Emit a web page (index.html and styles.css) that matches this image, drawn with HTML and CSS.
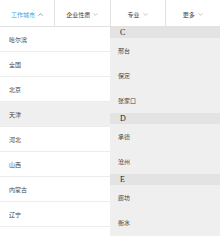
FILE: index.html
```html
<!DOCTYPE html>
<html>
<head>
<meta charset="utf-8">
<link rel="stylesheet" href="styles.css">
</head>
<body>
<div class="tabs">
  <div class="tab active">工作城市<svg class="chev" width="5" height="3" viewBox="0 0 5 3"><path d="M0.5 2.7 L2.5 0.6 L4.5 2.7" fill="none" stroke="currentColor" stroke-width="0.8"/></svg></div>
  <div class="tab">企业性质<svg class="chev" width="5" height="3" viewBox="0 0 5 3"><path d="M0.5 0.3 L2.5 2.4 L4.5 0.3" fill="none" stroke="currentColor" stroke-width="0.7"/></svg></div>
  <div class="tab">专业<svg class="chev" width="5" height="3" viewBox="0 0 5 3"><path d="M0.5 0.3 L2.5 2.4 L4.5 0.3" fill="none" stroke="currentColor" stroke-width="0.7"/></svg></div>
  <div class="tab">更多<svg class="chev" width="5" height="3" viewBox="0 0 5 3"><path d="M0.5 0.3 L2.5 2.4 L4.5 0.3" fill="none" stroke="currentColor" stroke-width="0.7"/></svg></div>
</div>
<div class="panes">
  <div class="left">
    <div class="row">哈尔滨</div>
    <div class="row">全国</div>
    <div class="row">北京</div>
    <div class="row sel">天津</div>
    <div class="row">河北</div>
    <div class="row">山西</div>
    <div class="row">内蒙古</div>
    <div class="row">辽宁</div>
  </div>
  <div class="right">
    <div class="letter">C</div>
    <div class="item">邢台</div>
    <div class="item">保定</div>
    <div class="item">张家口</div>
    <div class="letter">D</div>
    <div class="item">承德</div>
    <div class="item">沧州</div>
    <div class="letter">E</div>
    <div class="item">廊坊</div>
    <div class="item">衡水</div>
  </div>
</div>
</body>
</html>
```
FILE: styles.css
```css
html, body {
  margin: 0;
  padding: 0;
  background: #fff;
  overflow: hidden;
}
body {
  width: 220px;
  height: 236px;
  font-family: "Noto Sans CJK SC", "Noto Sans", sans-serif;
  font-size: 6px;
  color: #444;
  -webkit-font-smoothing: antialiased;
}
.tabs {
  display: flex;
  height: 26px;
  border-bottom: 1px solid #e2e2e2;
}
.tab {
  flex: 1;
  display: flex;
  align-items: center;
  justify-content: center;
  gap: 3px;
  border-right: 1px solid #e2e2e2;
  color: #444;
  padding-top: 2px;
  box-sizing: border-box;
}
.tab:last-child {
  border-right: none;
}
.tab .chev {
  color: #b0b0b0;
}
.tab.active {
  color: #3d9ee0;
}
.tab.active .chev {
  color: #3d9ee0;
}
.panes {
  display: flex;
}
.left {
  width: 110px;
}
.row {
  height: 25px;
  box-sizing: border-box;
  border-bottom: 1px solid #ececec;
  display: flex;
  align-items: center;
  padding-left: 9px;
}
.row.sel {
  background: #efefef;
}
.right {
  width: 110px;
  background: #efefef;
  height: 209px;
}
.letter {
  height: 11px;
  background: #e3e3e3;
  display: flex;
  align-items: center;
  padding-left: 10px;
  font-family: "Liberation Serif", serif;
  font-size: 8px;
  color: #222;
}
.item {
  height: 25px;
  display: flex;
  align-items: center;
  padding-left: 8px;
}
```
